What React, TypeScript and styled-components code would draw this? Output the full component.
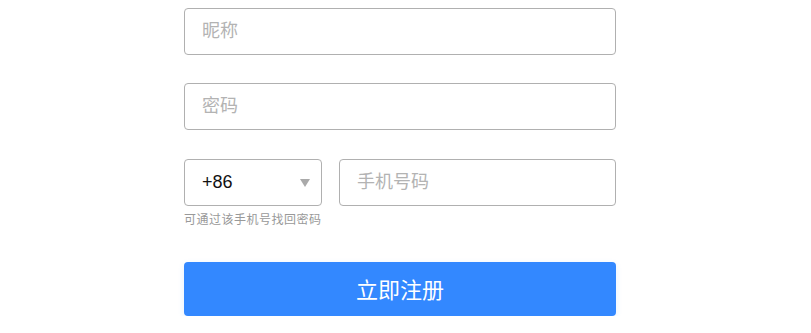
import styled, { createGlobalStyle } from 'styled-components'

const Global = createGlobalStyle`
  body {
    margin: 0;
    background: #fff;
    font-family: "Liberation Sans", "Noto Sans CJK SC", sans-serif;
  }
  input::placeholder {
    color: #b3b3b3;
  }
`

const Form = styled.form`
  width: 432px;
  margin-left: 184px;
  padding-top: 8px;
  display: flex;
  flex-direction: column;
`

const Field = styled.div<{ $gap: number }>`
  margin-bottom: ${(p) => p.$gap}px;
`

const Input = styled.input`
  box-sizing: border-box;
  width: 100%;
  height: 47px;
  border: 1px solid #b0b0b0;
  border-radius: 4px;
  padding: 0 17px;
  font-size: 18px;
  font-family: "Liberation Sans", "Noto Sans CJK SC", sans-serif;
  color: #333;
  outline: none;
  background: #fff;
`

const PhoneRow = styled.div`
  display: flex;
  gap: 17px;
`

const Select = styled.div`
  box-sizing: border-box;
  width: 138px;
  flex: none;
  height: 47px;
  border: 1px solid #b0b0b0;
  border-radius: 4px;
  padding: 0 11px 0 17px;
  display: flex;
  align-items: center;
  justify-content: space-between;
  font-size: 18px;
  color: #111;
`

const Caret = styled.span`
  width: 0;
  height: 0;
  border-left: 5px solid transparent;
  border-right: 5px solid transparent;
  border-top: 8px solid #aaa;
`

const Hint = styled.p`
  margin: 5px 0 0;
  font-size: 12px;
  letter-spacing: 0.5px;
  color: #999;
  font-family: "Noto Sans CJK SC", sans-serif;
  line-height: 16px;
`

const Submit = styled.button`
  height: 54px;
  width: 100%;
  border: none;
  border-radius: 4px;
  background: #3388ff;
  color: #fff;
  font-size: 22px;
  font-family: "Noto Sans CJK SC", sans-serif;
  box-shadow: 0 2px 6px rgba(51, 136, 255, 0.12);
  cursor: pointer;
  padding: 0 0 3px;
`

export default function App() {
  return (
    <>
      <Global />
      <Form onSubmit={(e) => e.preventDefault()}>
        <Field $gap={28}>
          <Input placeholder="昵称" />
        </Field>
        <Field $gap={29}>
          <Input type="password" placeholder="密码" />
        </Field>
        <Field $gap={35}>
          <PhoneRow>
            <Select>
              <span>+86</span>
              <Caret />
            </Select>
            <Input placeholder="手机号码" />
          </PhoneRow>
          <Hint>可通过该手机号找回密码</Hint>
        </Field>
        <Submit type="submit">立即注册</Submit>
      </Form>
    </>
  )
}
